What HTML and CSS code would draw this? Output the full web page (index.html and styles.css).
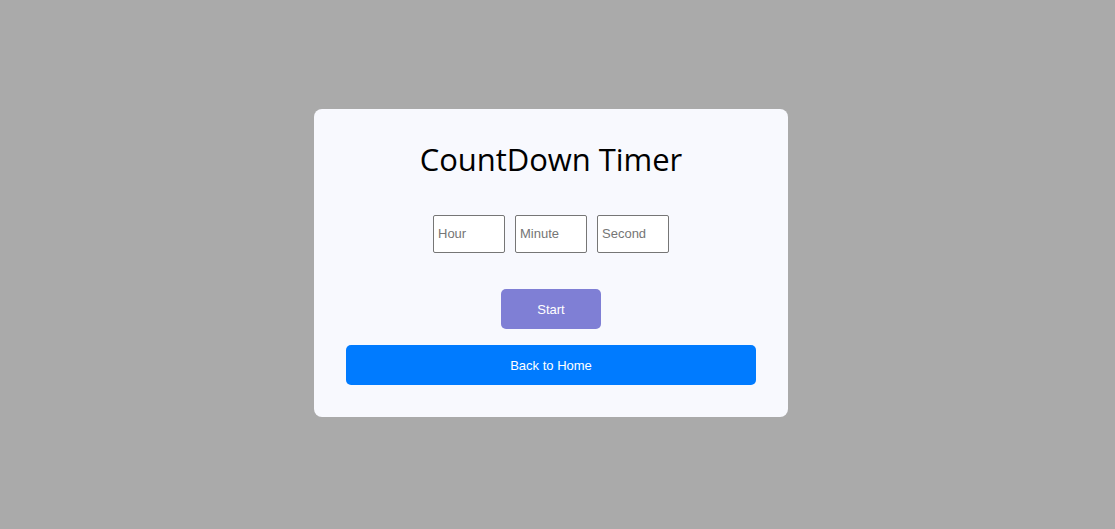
FILE: index.html
```html
<!DOCTYPE html>
<html lang="en">
<head>
<meta charset="utf-8">
<title>CountDown Timer</title>
<link rel="stylesheet" href="styles.css">
</head>
<body>
<main class="page">
  <section class="card">
    <h1 class="title">CountDown Timer</h1>
    <div class="inputs">
      <input class="field" type="text" placeholder="Hour">
      <input class="field" type="text" placeholder="Minute">
      <input class="field" type="text" placeholder="Second">
    </div>
    <button class="btn btn-start" type="button">Start</button>
    <button class="btn btn-home" type="button">Back to Home</button>
  </section>
</main>
</body>
</html>
```

FILE: styles.css
```css
html, body {
  margin: 0;
  padding: 0;
}
body {
  background: #aaaaaa;
  font-family: "Liberation Sans", Arial, sans-serif;
}
.page {
  box-sizing: border-box;
  height: 529px;
  padding-right: 13px;
  display: flex;
  align-items: center;
  justify-content: center;
}
.card {
  box-sizing: border-box;
  width: 474px;
  height: 308px;
  margin-top: -4px;
  background: #f8f9fe;
  border-radius: 8px;
  padding: 32px;
  display: flex;
  flex-direction: column;
  align-items: center;
}
.title {
  margin: 0;
  font-family: "Open Sans", "Noto Sans", sans-serif;
  font-weight: 400;
  font-size: 31px;
  line-height: 36px;
  color: #000;
  letter-spacing: -0.05px;
}
.inputs {
  margin-top: 38px;
  display: flex;
  gap: 10px;
}
.field {
  box-sizing: border-box;
  width: 72px;
  height: 38px;
  border: 1px solid #767676;
  border-radius: 2px;
  padding: 1px 3px 1px 4px;
  background: #fff;
  font-family: "Liberation Sans", Arial, sans-serif;
  font-size: 13px;
  color: #000;
}
.field::placeholder {
  color: #757575;
}
.btn {
  box-sizing: border-box;
  height: 40px;
  border: none;
  border-radius: 5px;
  padding: 2px 0 0;
  color: #fff;
  font-family: "Liberation Sans", Arial, sans-serif;
  font-size: 13px;
  cursor: pointer;
}
.btn-start {
  margin-top: 36px;
  width: 100px;
  background: #7f7fd5;
}
.btn-home {
  margin-top: 16px;
  width: 100%;
  background: #007bff;
}
```
